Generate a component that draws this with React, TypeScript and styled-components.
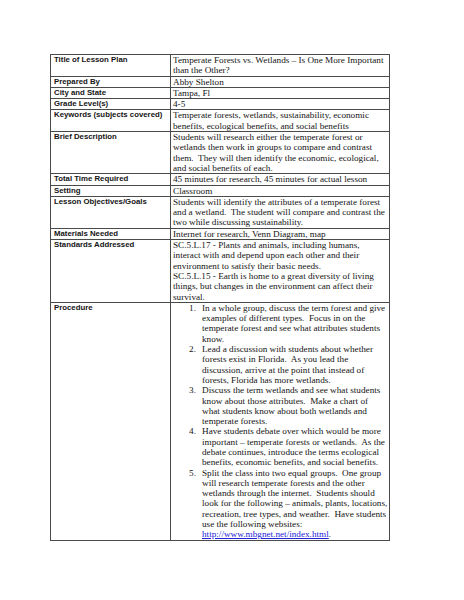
import React from "react";
import styled, { createGlobalStyle } from "styled-components";

const Global = createGlobalStyle`
  html, body { margin: 0; padding: 0; background: #ffffff; }
  body { width: 464px; height: 600px; overflow: hidden; }
`;

const Page = styled.div`
  padding: 54px 0 0 50px;
  background: #ffffff;
`;

const Table = styled.table`
  border-collapse: collapse;
  table-layout: fixed;
  width: 339px;
  border: 1px solid #4a4a4a;
`;

const LabelCell = styled.th`
  width: 120px;
  border: 1px solid #4a4a4a;
  padding: 0 2px 0 3px;
  vertical-align: top;
  text-align: left;
  font-family: "Liberation Sans", Arial, sans-serif;
  font-weight: bold;
  font-size: 7.8px;
  line-height: 10.3px;
  color: #141414;
  white-space: nowrap;
`;

const ValueCell = styled.td`
  border: 1px solid #4a4a4a;
  padding: 0 0 0 2px;
  vertical-align: top;
  font-family: "Liberation Serif", "Times New Roman", serif;
  font-size: 9.2px;
  line-height: 10.3px;
  color: #141414;
`;

const Line = styled.div`
  white-space: pre;
  height: 10.3px;
`;

const Steps = styled.ol`
  list-style: none;
  margin: 0;
  padding: 0;
`;

const Step = styled.li`
  display: grid;
  grid-template-columns: 23px 1fr;
  column-gap: 6px;
`;

const StepNum = styled.span`
  text-align: right;
`;

const WebLink = styled.a`
  color: #2323d8;
  text-decoration: underline;
`;

type Row = { label: string; lines: React.ReactNode[] };

const rows: Row[] = [
  {
    label: "Title of Lesson Plan",
    lines: [
      "Temperate Forests vs. Wetlands \u2013 Is One More Important",
      "than the Other?",
    ],
  },
  { label: "Prepared By", lines: ["Abby Shelton"] },
  { label: "City and State", lines: ["Tampa, Fl"] },
  { label: "Grade Level(s)", lines: ["4-5"] },
  {
    label: "Keywords (subjects covered)",
    lines: [
      "Temperate forests, wetlands, sustainability, economic",
      "benefits, ecological benefits, and social benefits",
    ],
  },
  {
    label: "Brief Description",
    lines: [
      "Students will research either the temperate forest or",
      "wetlands then work in groups to compare and contrast",
      "them.  They will then identify the economic, ecological,",
      "and social benefits of each.",
    ],
  },
  {
    label: "Total Time Required",
    lines: ["45 minutes for research, 45 minutes for actual lesson"],
  },
  { label: "Setting", lines: ["Classroom"] },
  {
    label: "Lesson Objectives/Goals",
    lines: [
      "Students will identify the attributes of a temperate forest",
      "and a wetland.  The student will compare and contrast the",
      "two while discussing sustainability.",
    ],
  },
  {
    label: "Materials Needed",
    lines: ["Internet for research, Venn Diagram, map"],
  },
  {
    label: "Standards Addressed",
    lines: [
      "SC.5.L.17 - Plants and animals, including humans,",
      "interact with and depend upon each other and their",
      "environment to satisfy their basic needs.",
      "SC.5.L.15 - Earth is home to a great diversity of living",
      "things, but changes in the environment can affect their",
      "survival.",
    ],
  },
];

const steps: React.ReactNode[][] = [
  [
    "In a whole group, discuss the term forest and give",
    "examples of different types.  Focus in on the",
    "temperate forest and see what attributes students",
    "know.",
  ],
  [
    "Lead a discussion with students about whether",
    "forests exist in Florida.  As you lead the",
    "discussion, arrive at the point that instead of",
    "forests, Florida has more wetlands.",
  ],
  [
    "Discuss the term wetlands and see what students",
    "know about those attributes.  Make a chart of",
    "what students know about both wetlands and",
    "temperate forests.",
  ],
  [
    "Have students debate over which would be more",
    "important \u2013 temperate forests or wetlands.  As the",
    "debate continues, introduce the terms ecological",
    "benefits, economic benefits, and social benefits.",
  ],
  [
    "Split the class into two equal groups.  One group",
    "will research temperate forests and the other",
    "wetlands through the internet.  Students should",
    "look for the following \u2013 animals, plants, locations,",
    "recreation, tree types, and weather.  Have students",
    "use the following websites:",
    <>
      <WebLink href="#">http://www.mbgnet.net/index.html</WebLink>.
    </>,
  ],
];

export default function App() {
  return (
    <Page>
      <Global />
      <Table>
        <colgroup>
          <col style={{ width: 120 }} />
          <col style={{ width: 219 }} />
        </colgroup>
        <tbody>
          {rows.map((r) => (
            <tr key={r.label}>
              <LabelCell>{r.label}</LabelCell>
              <ValueCell>
                {r.lines.map((l, i) => (
                  <Line key={i}>{l}</Line>
                ))}
              </ValueCell>
            </tr>
          ))}
          <tr>
            <LabelCell>Procedure</LabelCell>
            <ValueCell>
              <Steps>
                {steps.map((s, i) => (
                  <Step key={i}>
                    <StepNum>{i + 1}.</StepNum>
                    <div>
                      {s.map((l, j) => (
                        <Line key={j}>{l}</Line>
                      ))}
                    </div>
                  </Step>
                ))}
              </Steps>
            </ValueCell>
          </tr>
        </tbody>
      </Table>
    </Page>
  );
}
